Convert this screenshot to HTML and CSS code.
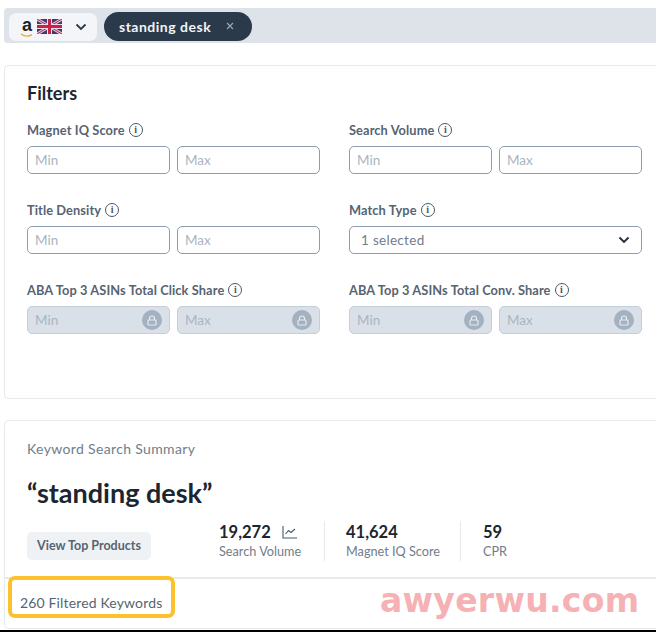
FILE: index.html
```html
<!DOCTYPE html>
<html lang="en">
<head>
  <meta charset="UTF-8" />
  <title>Keyword Search</title>
  <link rel="stylesheet" href="styles.css">
</head>
<body>
  <div class="search-strip">
    <div class="market-select">
      <span class="amazon-logo">a
        <svg viewBox="0 0 14 5" width="14" height="5"><path d="M1 1c3 2.600 8 2.600 11 .6" fill="none" stroke="#f0a63c" stroke-width="1.300"/></svg>
      </span>
      <svg class="flag" viewBox="0 0 25 15" width="25" height="15">
        <rect width="25" height="15" fill="#47356f"/>
        <path d="M0 0l25 15M25 0L0 15" stroke="#dcc6d8" stroke-width="3"/>
        <path d="M0 0l25 15M25 0L0 15" stroke="#b8265a" stroke-width="1"/>
        <path d="M12.500 0v15M0 7.500h25" stroke="#eddde8" stroke-width="5"/>
        <path d="M12.500 0v15M0 7.500h25" stroke="#c62346" stroke-width="3"/>
      </svg>
      <svg class="chevron" viewBox="0 0 12 8" width="12" height="8"><path d="M1.500 1.500L6 6l4.500-4.500" fill="none" stroke="#2a3a4a" stroke-width="1.800"/></svg>
    </div>
    <div class="chip">
      <span>standing desk</span>
      <svg viewBox="0 0 8 8" width="8" height="8"><path d="M1 1l6 6M7 1L1 7" stroke="#9aa7b4" stroke-width="1.200"/></svg>
    </div>
  </div>

  <section class="card filters">
    <h2>Filters</h2>
    <div class="filter-grid">
      <div class="field">
        <label>Magnet IQ Score <i class="info">i</i></label>
        <div class="pair">
          <div class="box">Min</div>
          <div class="box">Max</div>
        </div>
      </div>
      <div class="field">
        <label>Search Volume <i class="info">i</i></label>
        <div class="pair">
          <div class="box">Min</div>
          <div class="box">Max</div>
        </div>
      </div>
      <div class="field">
        <label>Title Density <i class="info">i</i></label>
        <div class="pair">
          <div class="box">Min</div>
          <div class="box">Max</div>
        </div>
      </div>
      <div class="field">
        <label>Match Type <i class="info">i</i></label>
        <div class="box select-box">
          <span>1 selected</span>
          <svg viewBox="0 0 12 8" width="12" height="8"><path d="M1.500 1.500L6 6l4.500-4.500" fill="none" stroke="#1f2d3a" stroke-width="1.800"/></svg>
        </div>
      </div>
      <div class="field">
        <label>ABA Top 3 ASINs Total Click Share <i class="info">i</i></label>
        <div class="pair">
          <div class="box locked">Min <b class="lock"><svg viewBox="0 0 10 11" width="10" height="11"><path d="M2.500 5V3.500a2.500 2.500 0 0 1 5 0V5" fill="none" stroke="#e6ebf0" stroke-width="1.200"/><rect x="1" y="5" width="8" height="5" rx="1" fill="none" stroke="#e6ebf0" stroke-width="1.200"/></svg></b></div>
          <div class="box locked">Max <b class="lock"><svg viewBox="0 0 10 11" width="10" height="11"><path d="M2.500 5V3.500a2.500 2.500 0 0 1 5 0V5" fill="none" stroke="#e6ebf0" stroke-width="1.200"/><rect x="1" y="5" width="8" height="5" rx="1" fill="none" stroke="#e6ebf0" stroke-width="1.200"/></svg></b></div>
        </div>
      </div>
      <div class="field">
        <label>ABA Top 3 ASINs Total Conv. Share <i class="info">i</i></label>
        <div class="pair">
          <div class="box locked">Min <b class="lock"><svg viewBox="0 0 10 11" width="10" height="11"><path d="M2.500 5V3.500a2.500 2.500 0 0 1 5 0V5" fill="none" stroke="#e6ebf0" stroke-width="1.200"/><rect x="1" y="5" width="8" height="5" rx="1" fill="none" stroke="#e6ebf0" stroke-width="1.200"/></svg></b></div>
          <div class="box locked">Max <b class="lock"><svg viewBox="0 0 10 11" width="10" height="11"><path d="M2.500 5V3.500a2.500 2.500 0 0 1 5 0V5" fill="none" stroke="#e6ebf0" stroke-width="1.200"/><rect x="1" y="5" width="8" height="5" rx="1" fill="none" stroke="#e6ebf0" stroke-width="1.200"/></svg></b></div>
        </div>
      </div>
    </div>
  </section>

  <section class="card summary">
    <div class="summary-top">
      <p class="eyebrow">Keyword Search Summary</p>
      <h1>“standing desk”</h1>
      <div class="stats">
        <div class="top-products">View Top Products</div>
        <div class="stat stat-volume">
          <strong>19,272
            <svg viewBox="0 0 15 13" width="15" height="13"><path d="M1 0v12h14M3.500 8l3-3.500 2.500 2 4-3.500" fill="none" stroke="#4a5864" stroke-width="1.100"/></svg>
          </strong>
          <span>Search Volume</span>
        </div>
        <div class="stat stat-score">
          <strong>41,624</strong>
          <span>Magnet IQ Score</span>
        </div>
        <div class="stat stat-cpr">
          <strong>59</strong>
          <span>CPR</span>
        </div>
      </div>
    </div>
    <div class="summary-bottom">
      <div class="highlight">260 Filtered Keywords</div>
      <div class="watermark">awyerwu.com</div>
    </div>
  </section>
</body>
</html>
```

FILE: styles.css
```css
:root {
  --ink: #1c2630;
  --label: #566472;
  --muted: #717d89;
  --line: #e6e9ed;
  --field: #8c9db0;
  --holder: #a9b5c1;
}

* {
  box-sizing: border-box;
}

html, body {
  height: 632px;
  overflow: hidden;
}

body {
  margin: 0;
  background: #fff;
  color: var(--ink);
  font-family: 'Lato', 'Open Sans', sans-serif;
  padding-top: 8px;
  border-bottom: 2px solid #000;
}

.search-strip {
  display: flex;
  align-items: center;
  gap: 7px;
  height: 35px;
  margin-left: 4px;
  padding: 2px 0 0 5px;
  background: #dde3e9;
  border-radius: 4px 0 0 4px;
}

.market-select {
  display: flex;
  align-items: center;
  width: 88px;
  height: 28px;
  padding-left: 11px;
  background: #f3f5f8;
  border-radius: 7px;
}

.amazon-logo {
  position: relative;
  width: 14px;
  height: 24px;
  font: bold 18px/20px 'Liberation Sans', sans-serif;
  text-align: center;
  color: #222;
}

.amazon-logo svg {
  position: absolute;
  left: 0;
  top: 18px;
}

.flag {
  margin-left: 3px;
}

.chevron {
  margin-left: 13px;
}

.chip {
  display: flex;
  align-items: center;
  gap: 15px;
  width: 148px;
  height: 29px;
  padding: 0 0 1px 15px;
  background: #2a3a4b;
  border-radius: 15px;
  color: #f2f4f6;
  font-size: 14px;
  font-weight: 700;
  letter-spacing: 0.5px;
}

.card {
  margin-left: 4px;
  background: #fff;
  border: 1px solid var(--line);
  border-right: none;
  border-radius: 5px 0 0 5px;
}

.filters {
  height: 334px;
  margin-top: 22px;
  padding: 16px 14px 0 22px;
}

.filters h2 {
  margin: 0 0 16px;
  height: 22px;
  font-size: 18px;
  line-height: 22px;
  font-weight: 700;
}

.filter-grid {
  display: grid;
  grid-template-columns: 293px 293px;
  column-gap: 29px;
  row-gap: 26px;
}

.field label {
  display: flex;
  align-items: center;
  gap: 4px;
  height: 20px;
  margin-bottom: 6px;
  color: var(--label);
  font-size: 12.800px;
  font-weight: 700;
  letter-spacing: 0.1px;
  white-space: nowrap;
}

.info {
  display: inline-block;
  width: 14px;
  height: 14px;
  border: 1.200px solid #4a5864;
  border-radius: 50%;
  color: #4a5864;
  font: bold 10px/12px 'Liberation Serif', serif;
  text-align: center;
}

.pair {
  display: flex;
  gap: 7px;
}

.box {
  position: relative;
  flex: 1;
  height: 28px;
  padding-left: 7px;
  border: 1px solid var(--field);
  border-radius: 5px;
  color: var(--holder);
  font-size: 13.500px;
  line-height: 26px;
}

.select-box {
  display: flex;
  align-items: center;
  justify-content: space-between;
  padding: 0 11px 0 11px;
  color: var(--muted);
  letter-spacing: 0.3px;
}

.locked {
  background: #d9e0e8;
  border-color: #c6cfd9;
  color: #aab5c1;
}

.lock {
  position: absolute;
  right: 7px;
  top: 3px;
  display: flex;
  align-items: center;
  justify-content: center;
  width: 20px;
  height: 20px;
  background: #a3b1c0;
  border-radius: 50%;
}

.summary {
  height: 209px;
  margin-top: 21px;
}

.summary-top {
  height: 158px;
  padding: 18px 0 0 22px;
  border-bottom: 2px solid var(--line);
}

.eyebrow {
  margin: 0;
  color: var(--muted);
  font-size: 14px;
  line-height: 20px;
  letter-spacing: 0.35px;
}

h1 {
  margin: 19px 0 0;
  height: 30px;
  font-size: 27px;
  line-height: 30px;
  font-weight: 700;
}

.stats {
  display: flex;
  align-items: flex-end;
  height: 40px;
  margin-top: 13px;
}

.top-products {
  width: 124px;
  height: 28px;
  margin-bottom: 1px;
  background: #eff2f5;
  border-radius: 5px;
  color: var(--label);
  font-size: 12.500px;
  font-weight: 700;
  line-height: 28px;
  text-align: center;
}

.stat {
  display: flex;
  flex-direction: column;
  height: 40px;
  border-left: 1px solid var(--line);
}

.stat-volume {
  width: 105px;
  margin-left: 68px;
  border-left: none;
}

.stat-score {
  width: 136px;
  padding-left: 21px;
}

.stat-cpr {
  padding-left: 22px;
}

.stat strong {
  display: flex;
  align-items: center;
  gap: 11px;
  font-size: 16.500px;
  line-height: 22px;
  font-weight: 700;
}

.stat span {
  color: var(--muted);
  font-size: 12.700px;
  line-height: 17px;
}

.summary-bottom {
  position: relative;
  height: 48px;
}

.highlight {
  position: absolute;
  left: 3px;
  top: -3px;
  width: 167px;
  height: 42px;
  padding: 13px 0 0 8px;
  border: 4px solid #fdc12d;
  border-radius: 7px;
  color: var(--label);
  font-size: 14px;
  line-height: 20px;
  letter-spacing: 0.15px;
  white-space: nowrap;
}

.watermark {
  position: absolute;
  left: 375px;
  top: 4px;
  color: #f6b1b4;
  font: bold 33px/36px 'DejaVu Sans', sans-serif;
  letter-spacing: 0.3px;
  white-space: nowrap;
}
```
